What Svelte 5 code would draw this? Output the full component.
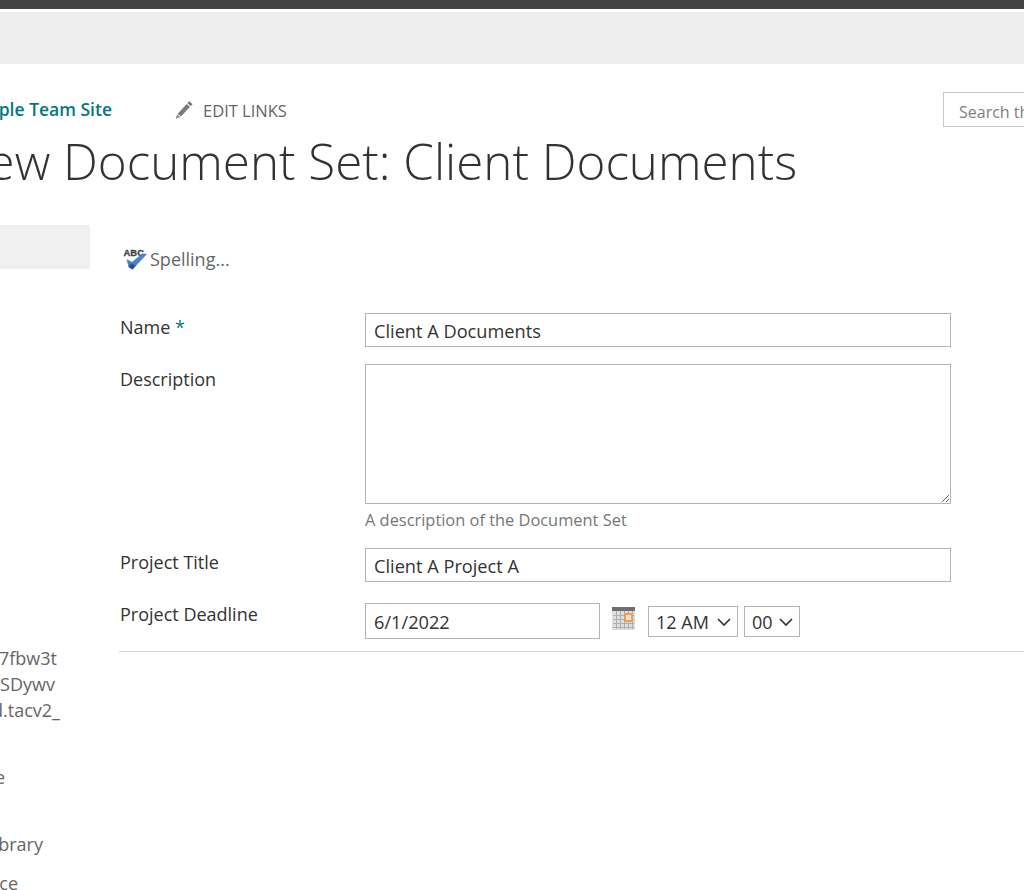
<script>
  const navLines = [
    { text: 'https://example.sharepoint/7fbw3t', end: 57, gap: 0 },
    { text: 'K9aQpLm/SDywv', end: 55, gap: 0 },
    { text: 'sites.shared.tacv2_', end: 60, gap: 0 },
    { text: 'Home', end: 5, gap: 41 },
    { text: 'Document Library', end: 43, gap: 41 },
    { text: 'Workspace', end: 18, gap: 13 }
  ]

  let name = 'Client A Documents'
  let title = 'Client A Project A'
  let deadline = '6/1/2022'
</script>

<div class="page">
  <div class="topbar"></div>
  <div class="suitebar"></div>

  <div class="header">
    <a class="site" href="#top">Example Team Site</a>
    <span class="edit">
      <svg width="18" height="18" viewBox="0 0 18 18">
        <path d="M14.200 0.300l3.300 2.900-1.700 1.900-3.300-2.900z" fill="#6f6f6f" />
        <path d="M11.700 2.900l3.300 2.900-9 9.800-3.300-2.900z" fill="#7a7a7a" />
        <path d="M2.100 13.300l3.200 2.800-4.600 1.700z" fill="#8a8a8a" />
      </svg>
      EDIT LINKS
    </span>
    <div class="search">Search this site</div>
  </div>

  <h1>New Document Set: Client Documents</h1>

  <div class="body">
    <nav>
      <div class="nav-current"></div>
      <div class="nav-list">
        {#each navLines as line}
          <a class="nav-line" href="#top" style="width: {line.end}px; margin-top: {line.gap}px">{line.text}</a>
        {/each}
      </div>
    </nav>

    <main>
      <div class="toolbar">
        <svg width="25" height="24" viewBox="0 0 25 24">
          <text x="0.500" y="9" font-size="9.500" font-weight="700" font-family="Liberation Sans, sans-serif" fill="#444" stroke="#444" stroke-width="0.300">ABC</text>
          <path d="M3.500 12l5.500 3L19.500 6.500l4.500 .5L9.500 22.500 5.500 20z" fill="#4a82d0" />
          <path d="M5.500 20l4 2.500 3.500-4-5-2z" fill="#28508f" />
        </svg>
        <span>Spelling...</span>
      </div>

      <div class="row first">
        <label for="name">Name <span class="req">*</span></label>
        <input id="name" type="text" bind:value={name} />
      </div>

      <div class="row desc">
        <label for="description">Description</label>
        <div class="field">
          <textarea id="description"></textarea>
          <p class="hint">A description of the Document Set</p>
        </div>
      </div>

      <div class="row project">
        <label for="title">Project Title</label>
        <input id="title" type="text" bind:value={title} />
      </div>

      <div class="row deadline">
        <label for="deadline">Project Deadline</label>
        <div class="date-field">
          <input id="deadline" type="text" bind:value={deadline} />
          <svg class="cal" width="23" height="23" viewBox="0 0 23 23">
            <rect x="0" y="0" width="23" height="23" rx="1" fill="#dedede" />
            <rect x="0" y="0" width="23" height="4" fill="#6e6e6e" />
            <path d="M1 8.500h21M1 12.500h21M1 16.500h21M1 20.500h21M4.500 4v18M8.500 4v18M12.500 4v18M16.500 4v18M20.500 4v18" stroke="#aeaeae" stroke-width="1" fill="none" />
            <rect x="13" y="7" width="7" height="7" fill="#fbe3c8" stroke="#ec9a4e" stroke-width="1.800" />
          </svg>
          <div class="select hours">
            <span>12 AM</span>
            <svg width="14" height="8" viewBox="0 0 14 8"><path d="M1 1l6 6 6-6" fill="none" stroke="#333" stroke-width="1.700" /></svg>
          </div>
          <div class="select minutes">
            <span>00</span>
            <svg width="14" height="8" viewBox="0 0 14 8"><path d="M1 1l6 6 6-6" fill="none" stroke="#333" stroke-width="1.700" /></svg>
          </div>
        </div>
      </div>

      <div class="rule"></div>
    </main>
  </div>
</div>

<style>
  :global(body) {
    margin: 0;
    background: #fff;
    overflow: hidden;
  }

  .page {
    width: 1024px;
    height: 890px;
    overflow: hidden;
    font-family: "Open Sans", "Noto Sans", sans-serif;
    font-size: 18px;
    color: #333;
  }

  .topbar {
    height: 9px;
    background: #444341;
  }

  .suitebar {
    height: 52px;
    margin-top: 3px;
    background: #eee;
  }

  .header {
    display: flex;
    align-items: center;
    height: 35px;
    margin-top: 28px;
    white-space: nowrap;
  }

  .site {
    width: 112px;
    flex: none;
    display: flex;
    justify-content: flex-end;
    margin-top: -2px;
    font-size: 17.500px;
    font-weight: 600;
    color: #03787c;
    text-decoration: none;
  }

  .edit {
    display: flex;
    align-items: center;
    gap: 10px;
    width: 768px;
    flex: none;
    margin-left: 63px;
    padding-top: 1px;
    font-size: 16.500px;
    color: #666;
  }

  .search {
    box-sizing: border-box;
    width: 120px;
    height: 35px;
    flex: none;
    padding: 8px 15px;
    border: 1px solid #c8c8c8;
    font-size: 16px;
    color: #808080;
  }

  h1 {
    margin: 4px 0 0 -48px;
    font-size: 49.300px;
    line-height: 60px;
    font-weight: 300;
    white-space: nowrap;
    color: #333;
  }

  .body {
    display: flex;
    margin-top: 34px;
  }

  nav {
    width: 120px;
    flex: none;
  }

  .nav-current {
    width: 90px;
    height: 44px;
    background: #f0f0f0;
  }

  .nav-list {
    margin-top: 376px;
  }

  .nav-line {
    display: flex;
    justify-content: flex-end;
    height: 26px;
    line-height: 26px;
    white-space: nowrap;
    color: #666;
    text-decoration: none;
  }

  main {
    flex: 1;
    min-width: 0;
  }

  .toolbar {
    display: flex;
    align-items: center;
    gap: 2px;
    height: 30px;
    margin: 19px 0 0 3px;
    color: #666;
  }

  .row {
    display: grid;
    grid-template-columns: 245px 586px;
    align-items: start;
  }

  .first {
    margin-top: 39px;
  }

  .desc {
    margin-top: 17px;
  }

  .project {
    margin-top: 16px;
  }

  .deadline {
    margin-top: 21px;
  }

  label {
    padding-top: 2px;
    line-height: 24px;
    color: #333;
  }

  .desc label {
    padding-top: 3px;
  }

  .deadline label {
    margin-top: -1px;
    padding-top: 0;
  }

  .req {
    color: #03787c;
  }

  input,
  textarea {
    box-sizing: border-box;
    display: block;
    width: 586px;
    margin: 0;
    padding: 1px 9px 0 8px;
    border: 1px solid #b4b4b4;
    border-radius: 0;
    outline: none;
    font: inherit;
    font-size: 18.200px;
    color: #333;
    background: #fff;
  }

  input {
    height: 34px;
  }

  textarea {
    height: 140px;
    resize: vertical;
  }

  .hint {
    margin: 4px 0 0;
    line-height: 24px;
    font-size: 16.400px;
    color: #777;
  }

  .date-field {
    display: flex;
    align-items: flex-start;
  }

  .date-field input {
    width: 235px;
    height: 36px;
    flex: none;
  }

  .cal {
    margin: 4px 0 0 12px;
    flex: none;
  }

  .select {
    box-sizing: border-box;
    height: 31px;
    margin-top: 3px;
    display: flex;
    align-items: center;
    justify-content: space-between;
    padding: 0 6px 0 7px;
    border: 1px solid #b4b4b4;
    flex: none;
  }

  .hours {
    width: 90px;
    margin-left: 13px;
  }

  .minutes {
    width: 56px;
    margin-left: 6px;
  }

  .rule {
    height: 1px;
    margin: 12px 0 0 -1px;
    background: #d4d4d4;
  }
</style>
